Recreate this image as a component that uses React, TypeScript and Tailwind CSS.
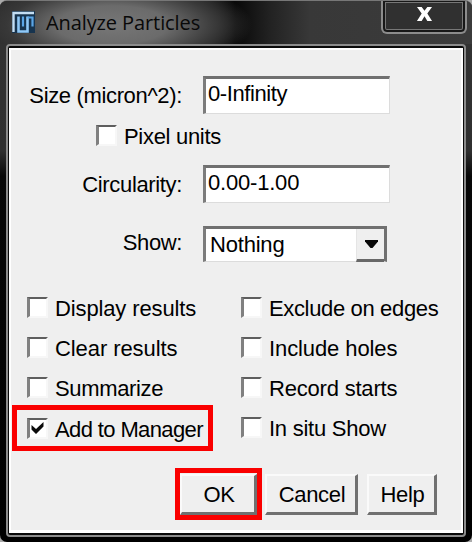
import React from "react";

function Box({ checked = false }: { checked?: boolean }) {
  return (
    <span className="flex h-[21px] w-[21px] shrink-0 items-center justify-center border-t-2 border-r-2 border-b-2 border-l-[3px] border-t-[#5e5e5e] border-r-[#f7f7f7] border-b-[#f7f7f7] border-l-[#808080] bg-white">
      {checked && (
        <svg viewBox="0 0 16 16" className="h-4 w-4 shrink-0">
          <path d="M1.5 5 L6 9 L13.5 2 V6.5 L6 14 L1.5 9.5 Z" fill="#0a0a0a" />
        </svg>
      )}
    </span>
  );
}

function Option({ label, tracking, checked }: { label: string; tracking: string; checked?: boolean }) {
  return (
    <label className="flex h-[21px] items-center gap-[7px]">
      <Box checked={checked} />
      <span className={`pt-[3px] ${tracking}`}>{label}</span>
    </label>
  );
}

function Field({ value, tracking }: { value: string; tracking: string }) {
  return (
    <div className={`flex h-[38px] w-[187px] items-center border-t-[3px] border-r border-b border-l-[3px] border-t-[#707070] border-r-[#dcdcdc] border-b-[#dcdcdc] border-l-[#7c7c7c] bg-white pb-[4px] pl-[2px] ${tracking}`}>
      {value}
    </div>
  );
}

function Button({ label, width }: { label: string; width: string }) {
  return (
    <button
      className={`flex h-[41px] items-center justify-center border-t-2 border-r-[3px] border-b-[3px] border-l-2 border-t-[#fafafa] border-r-[#707070] border-b-[#707070] border-l-[#fafafa] bg-[#efefef] pt-[3px] pl-[2px] tracking-[-0.35px] ${width}`}
    >
      {label}
    </button>
  );
}

export default function App() {
  return (
    <div className="h-[542px] w-[472px] overflow-hidden bg-[#aaa]">
      <div className="flex h-[542px] w-[472px] flex-col overflow-hidden rounded-[7px] border-t border-[#777] bg-[linear-gradient(to_bottom,#333_0px,#303030_150px,#080808_175px,#000_100%)] px-[6px] font-['Liberation_Sans',Arial,sans-serif] text-[22px] leading-[26px] whitespace-nowrap text-black">
        <header className="-mx-[6px] flex h-[43px] shrink-0 items-start bg-[radial-gradient(ellipse_140px_48px_at_112px_24px,#777_0%,#6b6b6b_40%,#383838_75%,transparent_100%),linear-gradient(to_right,#2a2a2a_0,#222_190px,#080808_235px,#222_270px,#383838_310px,#3b3b3b_100%)] pl-3">
          <svg viewBox="0 0 24 24" className="mt-[10px] h-6 w-6 shrink-0">
            <rect width="23" height="22" fill="#17344f" />
            <path d="M1.5 21 V2 H22" fill="none" stroke="#c4def3" strokeWidth="2.4" />
            <path d="M6.5 5.5 V20.5 H15.5 V5.5" fill="none" stroke="#8fc8f7" strokeWidth="2.6" />
            <path d="M11 5.5 V15.5 M20.5 5.5 V15.5 M15.5 6.5 H21" fill="none" stroke="#5aa5e6" strokeWidth="2.2" />
          </svg>
          <h1 className="mt-[8px] ml-[10px] w-[160px] font-['Open_Sans','Noto_Sans',sans-serif] text-[20px] leading-[28px] font-medium tracking-[-0.1px] text-[#090909]">
            Analyze Particles
          </h1>
          <button className="-mt-px ml-[175px] flex h-[34px] w-[86px] items-center justify-center rounded-b-[6px] border-2 border-t-0 border-[#8c8c8c] bg-[#303030] shadow-[inset_0_0_0_2px_#171717,inset_0_0_0_3px_#777]">
            <svg viewBox="0 0 18 17" className="mb-[5px] h-[16px] w-[17px]">
              <path d="M1 1 H6 L9 5 L12 1 H17 L12 8 L17 16 H12 L9 11 L6 16 H1 L6 8 Z" fill="white" />
            </svg>
          </button>
        </header>
        <div className="h-[493px] w-[460px] shrink-0 rounded-[4px] border-2 border-[#8c8c8c] bg-[#0a0a0a] p-px pt-[2px] pb-[2px]">
          <main className="h-[485px] w-[454px] border-2 border-b-[3px] border-white bg-[#efefef] pt-[26px]">
            <div className="flex h-[38px] items-center">
              <span className="w-[171px] pt-px text-right tracking-[-0.35px]">Size (micron^2):</span>
              <div className="-mt-px ml-[21px]"><Field value="0-Infinity" tracking="tracking-[-0.4px]" /></div>
            </div>
            <div className="mt-[11px] ml-[85px]">
              <Option label="Pixel units" tracking="tracking-[-0.3px]" />
            </div>
            <div className="mt-[19px] flex h-[38px] items-center">
              <span className="w-[171px] pt-px text-right tracking-[-0.35px]">Circularity:</span>
              <div className="-mt-px ml-[21px]"><Field value="0.00-1.00" tracking="tracking-[-0.2px]" /></div>
            </div>
            <div className="mt-[23px] flex h-[37px] items-center">
              <span className="w-[171px] pb-[3px] text-right tracking-[-0.4px]">Show:</span>
              <div className="-mt-px ml-[21px] flex h-[36px] w-[184px] items-center border-t-[3px] border-r-[3px] border-b border-l-[3px] border-t-[#707070] border-r-[#707070] border-b-[#dcdcdc] border-l-[#7c7c7c] bg-white pl-[4px]">
                <span className="flex-1 tracking-[-0.2px]">Nothing</span>
                <span className="-mb-px flex h-[33px] w-[28px] items-center justify-center border-b-[3px] border-l border-b-[#686868] border-l-[#e5e5e5] bg-[#efefef]">
                  <svg viewBox="0 0 13 8" className="ml-px h-2 w-[13px]">
                    <path d="M0 0 H13 V1.5 L7.5 8 H5.5 L0 1.5 Z" fill="#080808" />
                  </svg>
                </span>
              </div>
            </div>
            <div className="mt-[34px] flex">
              <div className="w-[214px] pl-[16px]">
                <div className="flex flex-col gap-[19px]">
                  <Option label="Display results" tracking="tracking-[-0.13px]" />
                  <Option label="Clear results" tracking="tracking-[-0.08px]" />
                  <Option label="Summarize" tracking="tracking-[-0.35px]" />
                </div>
                <div className="mt-[7px] -ml-[15px] flex h-[46px] w-[201px] items-center border-[5px] border-[#fa0000] pl-[10px]">
                  <Option label="Add to Manager" tracking="tracking-[-0.62px]" checked />
                </div>
              </div>
              <div className="flex flex-col gap-[19px] pl-[16px]">
                <Option label="Exclude on edges" tracking="tracking-[-0.35px]" />
                <Option label="Include holes" tracking="tracking-[-0.1px]" />
                <Option label="Record starts" tracking="tracking-[-0.2px]" />
                <Option label="In situ Show" tracking="tracking-[-0.25px]" />
              </div>
            </div>
            <footer className="mt-[17px] ml-[164px] flex items-center">
              <div className="flex h-[52px] w-[87px] items-center justify-center border-[5.5px] border-[#fa0000]">
                <Button label="OK" width="w-[77px]" />
              </div>
              <div className="ml-[3px] flex gap-[9px]">
                <Button label="Cancel" width="w-[93px]" />
                <Button label="Help" width="w-[70px]" />
              </div>
            </footer>
          </main>
        </div>
      </div>
    </div>
  );
}
